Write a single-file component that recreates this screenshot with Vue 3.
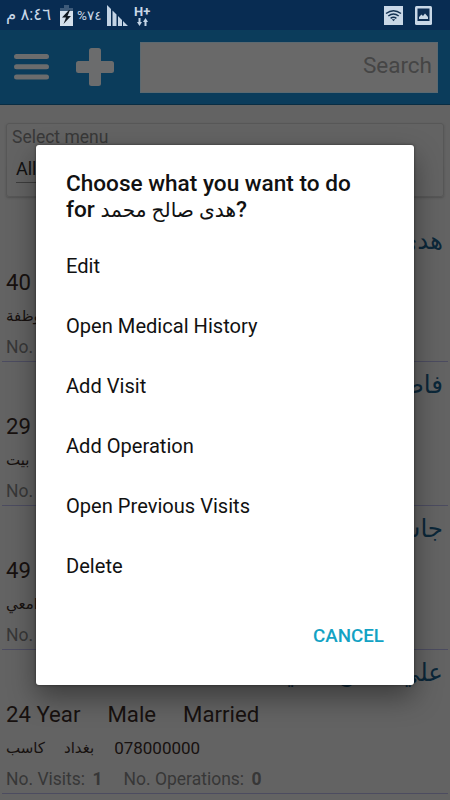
<template>
  <div class="screen">
    <header class="status-bar">
      <span class="clock" dir="rtl">٨:٤٦ م</span>
      <svg class="battery" width="13" height="21" viewBox="0 0 13 21">
        <path d="M4 0h5v3h4v5H0V3h4z" fill="#3d5a79" />
        <path d="M0 6h13v15H0z" fill="#d5e0ec" />
        <path d="M9 5 2 12.500h4L3.500 19 11 11H7.500L10 5z" fill="#101720" />
      </svg>
      <span class="percent">%٧٤</span>
      <svg class="signal" width="21" height="21" viewBox="0 0 21 21" fill="#c3d4e5">
        <path d="M0 0l4 4v17H0zM5.500 5.500l4 4V21h-4zM11 11l4 4v6h-4zM16 16l5 5h-5z" />
      </svg>
      <div class="network">
        <span>H+</span>
        <svg width="11" height="8" viewBox="0 0 11 8" fill="#c3d4e5">
          <path d="M1.500 0h2v4H5L2.500 8 0 4h1.500zM7.500 8h2V4H11L8.500 0 6 4h1.500z" />
        </svg>
      </div>
      <div class="status-right">
        <svg width="19" height="19" viewBox="0 0 19 19">
          <path d="M0 0h19v19H0z" fill="#c9d8e7" />
          <g fill="none" stroke="#123051" stroke-width="1.5">
            <path d="M2 7.500q7.500-5.500 15 0M4.300 10q5.200-4 10.400 0M6.600 12.300q2.900-2.200 5.800 0" />
          </g>
          <path d="M7.800 13.300h3.400l-1.700 2z" fill="#123051" />
        </svg>
        <svg width="17" height="19" viewBox="0 0 17 19">
          <rect width="17" height="19" rx="1.500" fill="#c9d8e7" />
          <path d="M2.500 2.500h12v12.500h-12z" fill="#0d2e54" />
          <path d="M4 13v-2l2.500-2.500L8 10l2-2.500L13 11v2z" fill="#c9d8e7" />
        </svg>
      </div>
    </header>

    <nav class="toolbar">
      <svg class="menu-icon" width="35" height="26" viewBox="0 0 35 26" fill="#6b6c6d">
        <rect width="35" height="5" rx="2.500" />
        <rect y="10.300" width="35" height="5" rx="2.500" />
        <rect y="20.600" width="35" height="5" rx="2.500" />
      </svg>
      <svg class="add-icon" width="38" height="38" viewBox="0 0 38 38" fill="#6b6c6d">
        <rect x="13" width="12" height="38" rx="2.500" />
        <rect y="13" width="38" height="12" rx="2.500" />
      </svg>
      <div class="search">Search</div>
    </nav>

    <section class="filter">
      <div class="filter-label">Select menu</div>
      <div class="filter-value">All</div>
    </section>

    <main>
      <article v-for="patient in patients" :key="patient.name" class="patient">
        <div class="name" dir="rtl">{{ patient.name }}</div>
        <div class="facts">
          <span>{{ patient.age }}<template v-if="patient.gender"> Year</template></span>
          <span>{{ patient.gender }}</span>
          <span>{{ patient.status }}</span>
        </div>
        <div class="details">
          <span class="job">{{ patient.job }}</span>
          <span class="city">{{ patient.city }}</span>
          <span class="phone">{{ patient.phone }}</span>
        </div>
        <div class="counts">
          <template v-if="patient.visits">
            <span>No. Visits: <b>{{ patient.visits }}</b></span>
            <span>No. Operations: <b>{{ patient.operations }}</b></span>
          </template>
          <span v-else>No.</span>
        </div>
      </article>
    </main>

    <div class="dialog">
      <h2>Choose what you want to do<br />for <span class="dialog-name">هدى صالح محمد</span>?</h2>
      <ul>
        <li v-for="action in actions" :key="action">{{ action }}</li>
      </ul>
      <button class="cancel">CANCEL</button>
    </div>
  </div>
</template>

<script setup>
const patients = [
  { name: 'هدى', age: 40, job: 'وظفة' },
  { name: 'فاطمة', age: 29, job: 'بيت' },
  { name: 'جاسم', age: 49, job: 'امعي' },
  {
    name: 'علي حسن ناجي',
    age: 24,
    gender: 'Male',
    status: 'Married',
    job: 'كاسب',
    city: 'بغداد',
    phone: '078000000',
    visits: 1,
    operations: 0
  }
];

const actions = [
  'Edit',
  'Open Medical History',
  'Add Visit',
  'Add Operation',
  'Open Previous Visits',
  'Delete'
];
</script>

<style>
body {
  margin: 0;
  overflow: hidden;
}
</style>

<style scoped>
.screen {
  position: relative;
  width: 450px;
  height: 800px;
  overflow: hidden;
  background: #636363;
  font-family: Roboto, "DejaVu Sans", sans-serif;
  color: #17110f;
}

.status-bar {
  display: flex;
  align-items: center;
  box-sizing: border-box;
  height: 30px;
  padding: 0 18px 0 7px;
  background: #082c52;
  color: #c9d8e7;
}

.clock {
  width: 44px;
  font-size: 16.500px;
  line-height: 26px;
  white-space: nowrap;
}

.battery {
  margin-left: 9px;
}

.percent {
  width: 24px;
  margin-left: 4px;
  font-size: 13.500px;
}

.signal {
  margin-left: 6px;
}

.network {
  display: flex;
  flex-direction: column;
  align-items: center;
  margin-left: 6px;
  font-size: 13px;
  font-weight: 700;
  line-height: 13px;
}

.status-right {
  display: flex;
  gap: 12px;
  margin-left: auto;
}

.toolbar {
  display: flex;
  align-items: center;
  box-sizing: border-box;
  height: 75px;
  padding: 0 12px 0 14px;
  background: #0b3c5b;
  border-bottom: 1px solid #092d43;
}

.add-icon {
  margin-left: 27px;
}

.search {
  flex: 1;
  box-sizing: border-box;
  height: 51px;
  margin-left: 26px;
  padding-right: 5px;
  background: #696969;
  border: 1px solid #5c6970;
  color: #454545;
  font-size: 22.500px;
  line-height: 44px;
  text-align: right;
}

.filter {
  box-sizing: border-box;
  height: 74px;
  margin: 18px 6px 0;
  padding: 3px 5px;
  border: 1px solid #575757;
  border-radius: 3px;
  box-shadow: 0 1px 2px #505050;
}

.filter-label {
  color: #383838;
  font-size: 17.500px;
  line-height: 20px;
}

.filter-value {
  width: 300px;
  margin: 9px 0 0 4px;
  border-bottom: 1px solid #3d3d3d;
  color: #111;
  font-size: 18px;
  line-height: 26px;
}

main {
  margin-top: 21px;
}

.patient {
  box-sizing: border-box;
  height: 144px;
  margin: 0 2px;
  padding: 0 5px 0 4px;
  border-bottom: 1px solid #4c4c60;
}

.name {
  height: 47px;
  color: #0b2739;
  font-size: 24.500px;
  line-height: 45px;
}

.facts {
  display: flex;
  gap: 27px;
  height: 34px;
  font-size: 22.200px;
  line-height: 34px;
}

.details {
  display: flex;
  align-items: center;
  height: 34px;
  font-size: 15px;
}

.job {
  line-height: 30px;
}

.city {
  margin-left: 19px;
  line-height: 30px;
}

.phone {
  margin-left: 20px;
  font-size: 17px;
}

.counts {
  display: flex;
  gap: 21px;
  color: #373737;
  font-size: 17.500px;
  line-height: 29px;
}

.counts b {
  margin-left: 3px;
}

.dialog {
  position: absolute;
  top: 145px;
  left: 36px;
  box-sizing: border-box;
  width: 378px;
  height: 540px;
  padding: 26px 30px 0;
  border-radius: 3px;
  background: #fff;
  box-shadow: 0 12px 28px rgba(0, 0, 0, 0.4), 0 0 3px rgba(0, 0, 0, 0.5);
  color: #111;
}

.dialog h2 {
  height: 65px;
  margin: 0;
  font-size: 22.600px;
  font-weight: 500;
  line-height: 26px;
  white-space: nowrap;
}

.dialog-name {
  font-size: 20.200px;
  font-weight: 400;
  line-height: 20px;
}

.dialog ul {
  margin: 0;
  padding: 0;
  list-style: none;
}

.dialog li {
  height: 60px;
  font-size: 20.100px;
  line-height: 60px;
}

.cancel {
  display: block;
  margin: 28px 0 0 auto;
  padding: 0;
  border: 0;
  background: none;
  color: #13a2c4;
  font-family: inherit;
  font-size: 18.800px;
  font-weight: 500;
  line-height: 24px;
}
</style>
